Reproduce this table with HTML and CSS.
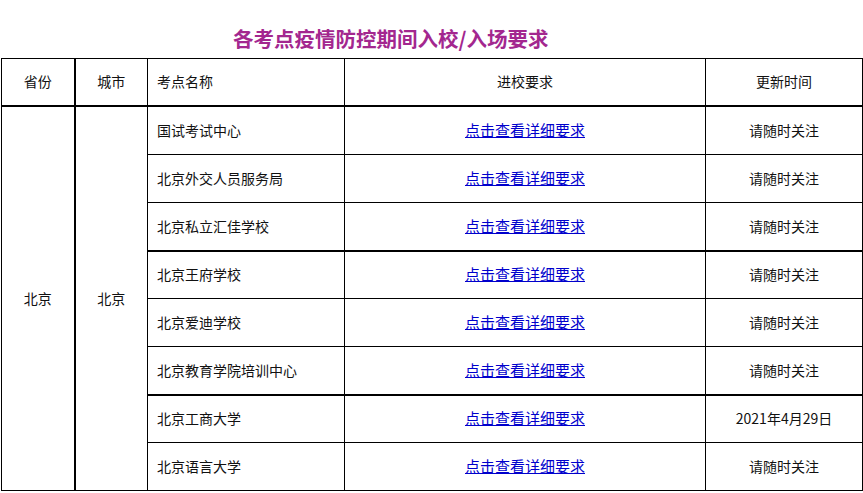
FILE: index.html
```html
<!DOCTYPE html>
<html lang="zh-CN">
<head>
<meta charset="utf-8">
<title>各考点疫情防控期间入校/入场要求</title>
<link rel="stylesheet" href="styles.css">
</head>
<body>
<h1 class="title">各考点疫情防控期间入校/入场要求</h1>
<table class="req-table">
  <colgroup>
    <col class="c-prov">
    <col class="c-city">
    <col class="c-name">
    <col class="c-req">
    <col class="c-time">
  </colgroup>
  <thead>
    <tr>
      <th class="center prov">省份</th>
      <th class="center">城市</th>
      <th class="left">考点名称</th>
      <th class="center">进校要求</th>
      <th class="center">更新时间</th>
    </tr>
  </thead>
  <tbody>
    <tr>
      <td class="center prov" rowspan="8">北京</td>
      <td class="center" rowspan="8">北京</td>
      <td class="left">国试考试中心</td>
      <td class="center"><a href="#">点击查看详细要求</a></td>
      <td class="center">请随时关注</td>
    </tr>
    <tr>
      <td class="left">北京外交人员服务局</td>
      <td class="center"><a href="#">点击查看详细要求</a></td>
      <td class="center">请随时关注</td>
    </tr>
    <tr>
      <td class="left">北京私立汇佳学校</td>
      <td class="center"><a href="#">点击查看详细要求</a></td>
      <td class="center">请随时关注</td>
    </tr>
    <tr class="thick-top">
      <td class="left">北京王府学校</td>
      <td class="center"><a href="#">点击查看详细要求</a></td>
      <td class="center">请随时关注</td>
    </tr>
    <tr>
      <td class="left">北京爱迪学校</td>
      <td class="center"><a href="#">点击查看详细要求</a></td>
      <td class="center">请随时关注</td>
    </tr>
    <tr>
      <td class="left">北京教育学院培训中心</td>
      <td class="center"><a href="#">点击查看详细要求</a></td>
      <td class="center">请随时关注</td>
    </tr>
    <tr class="thick-top">
      <td class="left">北京工商大学</td>
      <td class="center"><a href="#">点击查看详细要求</a></td>
      <td class="center">2021年4月29日</td>
    </tr>
    <tr>
      <td class="left">北京语言大学</td>
      <td class="center"><a href="#">点击查看详细要求</a></td>
      <td class="center">请随时关注</td>
    </tr>
  </tbody>
</table>
</body>
</html>
```

FILE: styles.css
```css
html, body {
  margin: 0;
  padding: 0;
  background: #ffffff;
}

body {
  font-family: "Noto Sans CJK SC", "Microsoft YaHei", "Noto Sans", sans-serif;
  color: #111111;
  font-size: 14px;
}

.title {
  margin: 0;
  height: 58px;
  box-sizing: border-box;
  padding: 26px 0 0 233px;
  font-size: 20.5px;
  line-height: 24px;
  font-weight: 700;
  color: #a3278f;
}

.req-table {
  border-collapse: collapse;
  table-layout: fixed;
  width: 861px;
  margin-left: 1px;
}

.c-prov { width: 73px; }
.c-city { width: 73px; }
.c-name { width: 197px; }
.c-req { width: 361px; }
.c-time { width: 157px; }

.req-table th,
.req-table td {
  border: 1px solid #000000;
  height: 45px;
  padding: 0 0 2px 0;
  font-weight: 400;
  font-size: 14px;
  line-height: 20px;
  vertical-align: middle;
}

.req-table thead th {
  border-bottom: 2px solid #000000;
  height: 44px;
}

.req-table .prov {
  border-right: 2px solid #000000;
}

.req-table .thick-top td {
  border-top: 2px solid #000000;
  height: 44px;
}

.center {
  text-align: center;
}

.left {
  text-align: left;
  padding-left: 9px !important;
}

.req-table a {
  color: #0000cc;
  font-size: 15px;
  text-decoration: underline;
}
```
